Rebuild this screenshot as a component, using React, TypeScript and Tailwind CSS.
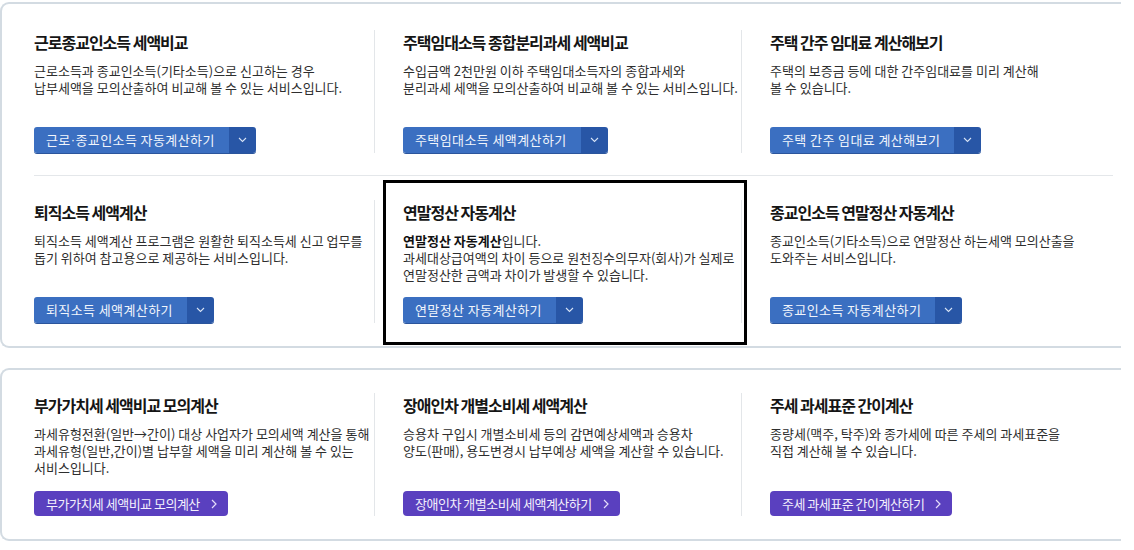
import type { ReactNode } from "react";

type Item = {
  title: string;
  desc: ReactNode;
  button: ReactNode;
  kind: "drop" | "link";
  highlight?: boolean;
};

const rowsTop: Item[][] = [
  [
    {
      title: "근로종교인소득 세액비교",
      desc: (
        <>
          근로소득과 종교인소득(기타소득)으로 신고하는 경우
          <br />
          납부세액을 모의산출하여 비교해 볼 수 있는 서비스입니다.
        </>
      ),
      button: (
        <>
          근로<span className="font-['Liberation_Sans',sans-serif]">·</span>종교인소득 자동계산하기
        </>
      ),
      kind: "drop",
    },
    {
      title: "주택임대소득 종합분리과세 세액비교",
      desc: (
        <>
          수입금액 2천만원 이하 주택임대소득자의 종합과세와
          <br />
          분리과세 세액을 모의산출하여 비교해 볼 수 있는 서비스입니다.
        </>
      ),
      button: "주택임대소득 세액계산하기",
      kind: "drop",
    },
    {
      title: "주택 간주 임대료 계산해보기",
      desc: (
        <>
          주택의 보증금 등에 대한 간주임대료를 미리 계산해
          <br />볼 수 있습니다.
        </>
      ),
      button: "주택 간주 임대료 계산해보기",
      kind: "drop",
    },
  ],
  [
    {
      title: "퇴직소득 세액계산",
      desc: (
        <>
          퇴직소득 세액계산 프로그램은 원활한 퇴직소득세 신고 업무를
          <br />
          돕기 위하여 참고용으로 제공하는 서비스입니다.
        </>
      ),
      button: "퇴직소득 세액계산하기",
      kind: "drop",
    },
    {
      title: "연말정산 자동계산",
      desc: (
        <>
          <b className="font-bold text-[#111]">연말정산 자동계산</b>입니다.
          <br />
          과세대상급여액의 차이 등으로 원천징수의무자(회사)가 실제로
          <br />
          연말정산한 금액과 차이가 발생할 수 있습니다.
        </>
      ),
      button: "연말정산 자동계산하기",
      kind: "drop",
      highlight: true,
    },
    {
      title: "종교인소득 연말정산 자동계산",
      desc: (
        <>
          종교인소득(기타소득)으로 연말정산 하는세액 모의산출을
          <br />
          도와주는 서비스입니다.
        </>
      ),
      button: "종교인소득 자동계산하기",
      kind: "drop",
    },
  ],
];

const rowBottom: Item[] = [
  {
    title: "부가가치세 세액비교 모의계산",
    desc: (
      <>
        과세유형전환(일반→간이) 대상 사업자가 모의세액 계산을 통해
        <br />
        과세유형(일반,간이)별 납부할 세액을 미리 계산해 볼 수 있는
        <br />
        서비스입니다.
      </>
    ),
    button: "부가가치세 세액비교 모의계산",
    kind: "link",
  },
  {
    title: "장애인차 개별소비세 세액계산",
    desc: (
      <>
        승용차 구입시 개별소비세 등의 감면예상세액과 승용차
        <br />
        양도(판매), 용도변경시 납부예상 세액을 계산할 수 있습니다.
      </>
    ),
    button: "장애인차 개별소비세 세액계산하기",
    kind: "link",
  },
  {
    title: "주세 과세표준 간이계산",
    desc: (
      <>
        종량세(맥주, 탁주)와 종가세에 따른 주세의 과세표준을
        <br />
        직접 계산해 볼 수 있습니다.
      </>
    ),
    button: "주세 과세표준 간이계산하기",
    kind: "link",
  },
];

function DropButton({ label }: { label: ReactNode }) {
  return (
    <div className="inline-flex h-[26px] self-start overflow-hidden rounded-[3px] shadow-[0_1px_0_#2b559c]">
      <span className="flex items-center bg-[#3b6fc1] pl-[12px] pr-[14px] text-[13px] tracking-[0.4px] text-[#f1f5fc]">
        {label}
      </span>
      <span className="flex w-[27px] items-center justify-center bg-[#2856a6]">
        <svg width="9" height="6" viewBox="0 0 9 6" fill="none">
          <path d="M1 1l3.5 3.5L8 1" stroke="#d6e2f5" strokeWidth="1.1" />
        </svg>
      </span>
    </div>
  );
}

function LinkButton({ label }: { label: ReactNode }) {
  return (
    <div className="inline-flex h-[25px] items-center gap-[11px] self-start rounded-[4px] bg-[#5a40bf] pl-[12px] pr-[11px] text-[13px] tracking-[-0.5px] text-[#f3f0fc]">
      <span>{label}</span>
      <svg width="6" height="10" viewBox="0 0 6 10" fill="none">
        <path d="M1 1l4 4-4 4" stroke="#e4ddfa" strokeWidth="1.2" />
      </svg>
    </div>
  );
}

function Cell({ item, first }: { item: Item; first: boolean }) {
  return (
    <div
      className={`relative flex min-h-[123px] flex-col pl-[28px] ${
        first ? "" : "border-l border-[#e3e6e9]"
      }`}
    >
      <h3 className="h-[24px] text-[16px] font-bold leading-[24px] tracking-[-1px] text-[#151515]">
        {item.title}
      </h3>
      <p className="mt-[8px] whitespace-nowrap text-[13px] leading-[17px] text-[#2e2e2e]">
        {item.desc}
      </p>
      <div className="mt-auto flex pt-[12px]">
        {item.kind === "drop" ? <DropButton label={item.button} /> : <LinkButton label={item.button} />}
      </div>
      {item.highlight && (
        <div className="pointer-events-none absolute -top-[20px] -bottom-[22px] left-[8px] -right-[6px] border-[3px] border-black" />
      )}
    </div>
  );
}

export default function App() {
  return (
    <div
      className="min-h-[550px] bg-white pt-[2px]"
      style={{ fontFamily: '"Noto Sans CJK KR", "Noto Sans", sans-serif' }}
    >
      <section className="w-[1121px] rounded-l-[9px] border-y-2 border-l-2 border-[#d3dbe2] pb-[23px] pl-[4px] pr-[8px] pt-[26px]">
        <div className="grid grid-cols-[368px_367px_372px]">
          {rowsTop[0].map((it, i) => (
            <Cell key={it.title} item={it} first={i === 0} />
          ))}
        </div>
        <div className="my-[22px] ml-[28px] h-px bg-[#e4e7ea]" />
        <div className="mt-[24px] grid grid-cols-[368px_367px_372px]">
          {rowsTop[1].map((it, i) => (
            <Cell key={it.title} item={it} first={i === 0} />
          ))}
        </div>
      </section>

      <section className="mt-[20px] w-[1121px] rounded-l-[9px] border-y-2 border-l-2 border-[#d3dbe2] pb-[23px] pl-[4px] pr-[8px] pt-[23px]">
        <div className="grid grid-cols-[368px_367px_372px]">
          {rowBottom.map((it, i) => (
            <Cell key={it.title} item={it} first={i === 0} />
          ))}
        </div>
      </section>
    </div>
  );
}
